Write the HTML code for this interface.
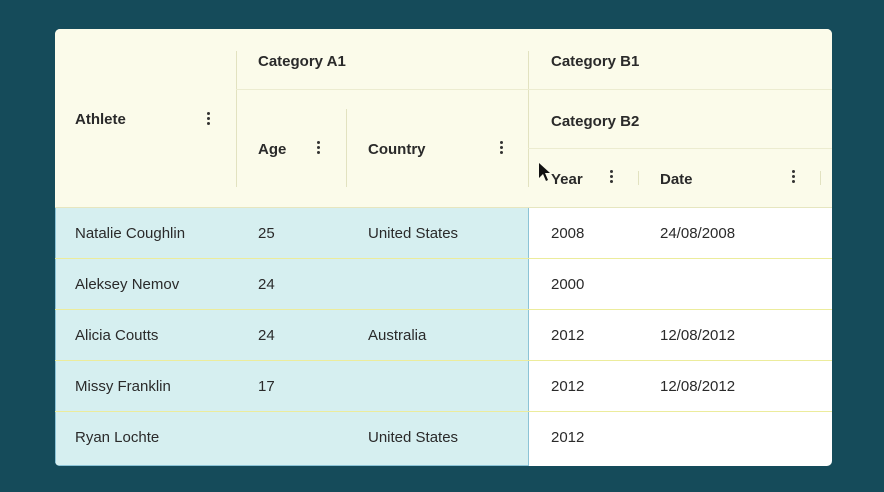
<!DOCTYPE html><html><head><style>
body{margin:0;width:884px;height:492px;background:#154b5a;font-family:"Liberation Sans",sans-serif;position:relative;overflow:hidden}
.card{position:absolute;left:55px;top:29px;width:777px;height:437px;background:#fff;border-radius:5px;overflow:hidden}
.hdr{position:absolute;left:0;top:0;width:777px;height:178px;background:#fbfbea}
.t{position:absolute;font-size:15px;color:#2a2a2a;white-space:nowrap}
.b{font-weight:bold}
.vl{position:absolute;width:1px;background:#e2e2c0}
.hl{position:absolute;height:1px;background:#ecec9c}
.pin{position:absolute;left:0;top:178px;width:474px;height:259px;background:#d6eff0;border:1px solid #8cc3d6;box-sizing:border-box}
.dots{position:absolute;width:3px}
.dots i{display:block;width:3px;height:3px;background:#333;border-radius:50%;margin-bottom:2px}
</style></head><body><div class="card">
<div class="hdr"></div>
<div class="pin"></div>
<div class="vl" style="left:181px;top:22px;height:136px"></div>
<div class="vl" style="left:291px;top:80px;height:78px"></div>
<div class="vl" style="left:473px;top:22px;height:136px"></div>
<div class="vl" style="left:583px;top:142px;height:14px"></div>
<div class="vl" style="left:765px;top:142px;height:14px"></div>
<div class="hl" style="left:181px;top:60px;width:596px;background:#ececd0"></div>
<div class="hl" style="left:473px;top:119px;width:304px;background:#ececd0"></div>
<div class="hl" style="left:0;top:178px;width:777px;background:#e6e6c0"></div>
<div class="hl" style="left:0;top:229px;width:777px"></div>
<div class="hl" style="left:0;top:280px;width:777px"></div>
<div class="hl" style="left:0;top:331px;width:777px"></div>
<div class="hl" style="left:0;top:382px;width:777px"></div>
<div class="t b" style="left:20px;top:82px">Athlete</div>
<div class="dots" style="left:152px;top:83px"><i></i><i></i><i></i></div>
<div class="t b" style="left:203px;top:24px">Category A1</div>
<div class="t b" style="left:496px;top:24px">Category B1</div>
<div class="t b" style="left:496px;top:84px">Category B2</div>
<div class="t b" style="left:203px;top:112px">Age</div>
<div class="dots" style="left:262px;top:112px"><i></i><i></i><i></i></div>
<div class="t b" style="left:313px;top:112px">Country</div>
<div class="dots" style="left:445px;top:112px"><i></i><i></i><i></i></div>
<div class="t b" style="left:496px;top:142px">Year</div>
<div class="dots" style="left:555px;top:141px"><i></i><i></i><i></i></div>
<div class="t b" style="left:605px;top:142px">Date</div>
<div class="dots" style="left:737px;top:141px"><i></i><i></i><i></i></div>
<div class="t" style="left:20px;top:196px">Natalie Coughlin</div><div class="t" style="left:203px;top:196px">25</div><div class="t" style="left:313px;top:196px">United States</div><div class="t" style="left:496px;top:196px">2008</div><div class="t" style="left:605px;top:196px">24/08/2008</div>
<div class="t" style="left:20px;top:247px">Aleksey Nemov</div><div class="t" style="left:203px;top:247px">24</div><div class="t" style="left:496px;top:247px">2000</div>
<div class="t" style="left:20px;top:298px">Alicia Coutts</div><div class="t" style="left:203px;top:298px">24</div><div class="t" style="left:313px;top:298px">Australia</div><div class="t" style="left:496px;top:298px">2012</div><div class="t" style="left:605px;top:298px">12/08/2012</div>
<div class="t" style="left:20px;top:349px">Missy Franklin</div><div class="t" style="left:203px;top:349px">17</div><div class="t" style="left:496px;top:349px">2012</div><div class="t" style="left:605px;top:349px">12/08/2012</div>
<div class="t" style="left:20px;top:400px">Ryan Lochte</div><div class="t" style="left:313px;top:400px">United States</div><div class="t" style="left:496px;top:400px">2012</div>
<svg style="position:absolute;left:483px;top:133px" width="14" height="22"><path d="M1 1 L1 16 L5 12 L8 19 L10 18 L7 11 L12 11 Z" fill="#111"/></svg>
</div></body></html>
